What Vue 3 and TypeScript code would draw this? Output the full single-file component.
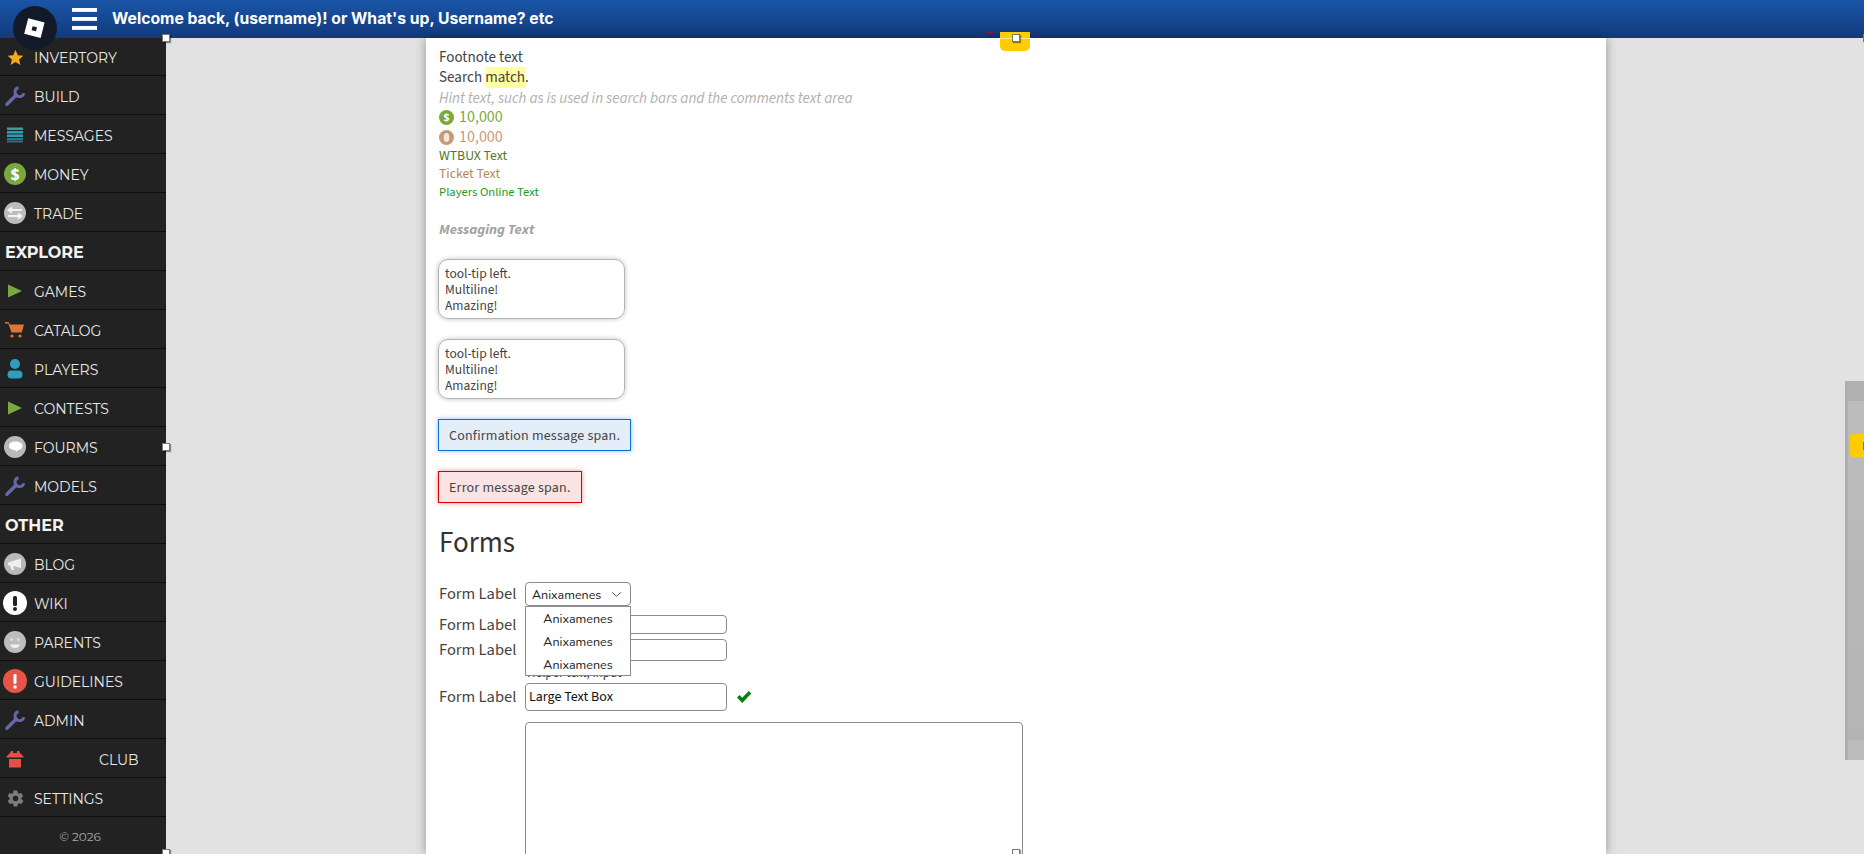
<script setup lang="ts">
type Row = { label: string; icon?: string; heading?: boolean; wide?: boolean }

const rows: Row[] = [
  { label: 'INVERTORY', icon: 'star' },
  { label: 'BUILD', icon: 'wrench' },
  { label: 'MESSAGES', icon: 'list' },
  { label: 'MONEY', icon: 'money' },
  { label: 'TRADE', icon: 'trade' },
  { label: 'EXPLORE', heading: true },
  { label: 'GAMES', icon: 'play' },
  { label: 'CATALOG', icon: 'cart' },
  { label: 'PLAYERS', icon: 'person' },
  { label: 'CONTESTS', icon: 'play' },
  { label: 'FOURMS', icon: 'bubble' },
  { label: 'MODELS', icon: 'wrench' },
  { label: 'OTHER', heading: true },
  { label: 'BLOG', icon: 'blog' },
  { label: 'WIKI', icon: 'wiki' },
  { label: 'PARENTS', icon: 'smile' },
  { label: 'GUIDELINES', icon: 'alert' },
  { label: 'ADMIN', icon: 'wrench' },
  { label: 'CLUB', icon: 'club', wide: true },
  { label: 'SETTINGS', icon: 'gear' },
]

const handles = [
  { x: 166, y: 38 },
  { x: 166, y: 447 },
  { x: 166, y: 853 },
  { x: 1016, y: 38 },
  { x: 1867, y: 38 },
  { x: 1867, y: 446 },
  { x: 1016, y: 853 },
]

const options = ['Anixamenes', 'Anixamenes', 'Anixamenes']
</script>

<template>
  <div class="app">
    <header class="topbar">
      <span class="burger"><i></i><i></i><i></i></span>
      <h1 class="welcome">Welcome back, (username)! or What's up, Username? etc</h1>
    </header>

    <div class="logo">
      <svg viewBox="0 0 44 44" width="44" height="44">
        <path d="M15.2 12.2 L31.6 16.4 L27.6 32 L11.2 27.8 Z M19.6 20.2 L18.6 24.2 L23 25.2 L24 21.2 Z" fill="#fff" fill-rule="evenodd" />
      </svg>
    </div>

    <div class="layout">
      <nav class="sidebar">
        <div v-for="row in rows" :key="row.label" class="row" :class="{ heading: row.heading }">
          <span v-if="row.icon" class="ico">
            <svg v-if="row.icon === 'star'" viewBox="0 0 24 24" width="17" height="17"><path d="M12 1.5l3.2 7.2 7.8.8-5.9 5.2 1.8 7.8L12 18.4l-6.9 4.1 1.8-7.8L1 9.5l7.8-.8z" fill="#f3aa1c" /></svg>
            <svg v-else-if="row.icon === 'wrench'" viewBox="0 0 24 24" width="22" height="22"><g fill="none" stroke="#6468a8"><path d="M3.2 21 L13.4 11" stroke-width="3.8" stroke-linecap="round" /><path d="M15.8 3 A4.9 4.9 0 1 0 21.6 9" stroke-width="3.2" /></g></svg>
            <svg v-else-if="row.icon === 'list'" viewBox="0 0 16 16" width="16" height="16"><g fill="#2f9db5"><rect y="0.5" width="16" height="2.5" /><rect y="4" width="16" height="2.5" /><rect y="7.5" width="16" height="2.5" /><rect y="11" width="16" height="2.5" opacity=".7" /><rect y="14" width="16" height="1.5" opacity=".6" /></g></svg>
            <svg v-else-if="row.icon === 'money'" viewBox="0 0 22 22" width="22" height="22"><circle cx="11" cy="11" r="11" fill="#7aa83f" /><text x="11" y="16.5" text-anchor="middle" class="glyph">$</text></svg>
            <svg v-else-if="row.icon === 'trade'" viewBox="0 0 22 22" width="22" height="22"><circle cx="11" cy="11" r="11" fill="#bdbdbd" /><path d="M5 8h13M8 5.5L4.8 8 8 10.5M17 14H4M14 11.5l3.2 2.5-3.2 2.5" stroke="#f3f3f3" stroke-width="2.2" fill="none" /></svg>
            <svg v-else-if="row.icon === 'play'" viewBox="0 0 14 14" width="14" height="14"><path d="M0 0.5 L14 7 L0 13.5 Z" fill="#7aa83f" /></svg>
            <svg v-else-if="row.icon === 'cart'" viewBox="0 0 20 18" width="20" height="18"><path d="M0 1h3.5l1.2 2.5H19l-2.2 8H6.6L3.2 2.6H0z" fill="#dc7735" /><circle cx="7" cy="15" r="1.6" fill="#dc7735" /><circle cx="15" cy="15" r="1.6" fill="#dc7735" /></svg>
            <svg v-else-if="row.icon === 'person'" viewBox="0 0 16 20" width="16" height="20"><circle cx="8" cy="5" r="5" fill="#2f9dc0" /><rect x="0.5" y="11.5" width="15" height="8" rx="4" fill="#2f9dc0" /></svg>
            <svg v-else-if="row.icon === 'bubble'" viewBox="0 0 22 22" width="22" height="22"><circle cx="11" cy="11" r="11" fill="#b9b9b9" /><path d="M11 5.5c4.5 0 7.5 1.8 7.5 4.4 0 2.3-2 4-5 4.3-.3 1-1 1.7-2 2.1.4-.7.5-1.3.4-2-3.8-.1-6.9-1.9-6.9-4.4 0-2.6 2.6-4.4 6-4.4z" fill="#fff" /></svg>
            <svg v-else-if="row.icon === 'blog'" viewBox="0 0 22 22" width="22" height="22"><circle cx="11" cy="11" r="11" fill="#b9b9b9" /><path d="M4 9.5 L17 5.5 V15 L9 13 L10 17 H7.5 L6 12.5 H4z" fill="#efefef" /></svg>
            <svg v-else-if="row.icon === 'wiki'" viewBox="0 0 24 24" width="24" height="24"><circle cx="12" cy="12" r="12" fill="#fff" /><rect x="10" y="5" width="4" height="10" rx="1.5" fill="#222" /><circle cx="12" cy="18" r="2" fill="#222" /></svg>
            <svg v-else-if="row.icon === 'smile'" viewBox="0 0 22 22" width="22" height="22"><circle cx="11" cy="11" r="11" fill="#bdbdbd" /><circle cx="7.5" cy="8.5" r="1.5" fill="#dedede" /><circle cx="14.5" cy="8.5" r="1.5" fill="#dedede" /><path d="M6 13.5h10c-.8 2.4-2.6 3.5-5 3.5s-4.2-1.1-5-3.5z" fill="#f2f2f2" /></svg>
            <svg v-else-if="row.icon === 'alert'" viewBox="0 0 24 24" width="24" height="24"><circle cx="12" cy="12" r="12" fill="#e65445" /><rect x="10.5" y="5" width="3" height="10" rx="1.2" fill="#fff" /><circle cx="12" cy="18" r="1.8" fill="#fff" /></svg>
            <svg v-else-if="row.icon === 'club'" viewBox="0 0 18 18" width="18" height="18"><path d="M0.5 6.5 L4 3 L5 1 H7 V3 H11 V1 H13 L14 3 L17.5 6.5 V7.5 H0.5 Z M3 9 H15 V17.5 H3 Z" fill="#e55044" /></svg>
            <svg v-else-if="row.icon === 'gear'" viewBox="0 0 24 24" width="19" height="19"><path d="M19.4 13c.1-.3.1-.7.1-1s0-.7-.1-1l2.1-1.6c.2-.2.2-.4.1-.6l-2-3.5c-.1-.2-.4-.3-.6-.2l-2.5 1c-.5-.4-1.1-.7-1.7-1l-.4-2.6c0-.3-.2-.5-.5-.5h-4c-.3 0-.5.2-.5.4l-.4 2.7c-.6.2-1.2.6-1.7 1l-2.5-1c-.2-.1-.5 0-.6.2l-2 3.5c-.1.2-.1.5.1.6L4.6 11c-.1.3-.1.7-.1 1s0 .7.1 1l-2.1 1.6c-.2.2-.2.4-.1.6l2 3.5c.1.2.4.3.6.2l2.5-1c.5.4 1.1.7 1.7 1l.4 2.6c0 .3.2.5.5.5h4c.3 0 .5-.2.5-.4l.4-2.7c.6-.2 1.2-.6 1.7-1l2.5 1c.2.1.5 0 .6-.2l2-3.5c.1-.2.1-.5-.1-.6zM12 15.5a3.5 3.5 0 1 1 0-7 3.5 3.5 0 0 1 0 7z" fill="#7c7c7c" /></svg>
          </span>
          <span class="row-label" :class="{ wide: row.wide }">{{ row.label }}</span>
        </div>
        <div class="copy">© 2026</div>
      </nav>

      <main class="stage">
        <section class="card">
          <p class="line">Footnote text</p>
          <p class="line">Search <mark>match</mark>.</p>
          <p class="line hint">Hint text, such as is used in search bars and the comments text area</p>
          <p class="line amount green first">
            <svg viewBox="0 0 16 16" width="15" height="15"><circle cx="8" cy="8" r="8" fill="#7aa83f" /><text x="8" y="12" text-anchor="middle" class="glyph small">$</text></svg>
            10,000
          </p>
          <p class="line amount tan">
            <svg viewBox="0 0 16 16" width="15" height="15"><circle cx="8" cy="8" r="8" fill="#c89a73" /><ellipse cx="8" cy="8" rx="3" ry="4.8" fill="#f3e7dc" /></svg>
            10,000
          </p>
          <p class="mini wtbux">WTBUX Text</p>
          <p class="mini ticket">Ticket Text</p>
          <p class="mini online">Players Online Text</p>
          <p class="messaging">Messaging Text</p>

          <div class="tip">tool-tip left.<br />Multiline!<br />Amazing!</div>
          <div class="tip">tool-tip left.<br />Multiline!<br />Amazing!</div>

          <div class="notice ok">Confirmation message span.</div>
          <div class="notice bad">Error message span.</div>

          <h2 class="forms">Forms</h2>

          <div class="form">
            <div class="f-row r1">
              <label>Form Label</label>
              <div class="select">
                <span>Anixamenes</span>
                <svg viewBox="0 0 12 8" width="11" height="7"><path d="M1 1.5 L6 6 L11 1.5" fill="none" stroke="#555" stroke-width="1.1" /></svg>
              </div>
            </div>
            <div class="f-row r2">
              <label>Form Label</label>
              <div class="input small"></div>
            </div>
            <div class="f-row r3">
              <label>Form Label</label>
              <div class="input medium"></div>
            </div>
            <p class="under">Helper text, input</p>
            <div class="f-row r4">
              <label>Form Label</label>
              <div class="input large">Large Text Box</div>
              <svg class="tick" viewBox="0 0 16 14" width="16" height="14"><path d="M1 7.5 L3.5 5 L6.2 7.7 L12.8 1 L15.3 3.5 L6.2 13 Z" fill="#0a800a" /></svg>
            </div>
            <div class="textarea"></div>
          </div>

          <div class="menu">
            <div v-for="(opt, i) in options" :key="i" class="menu-item">{{ opt }}</div>
          </div>
        </section>
      </main>
    </div>

    <div class="strip"><span class="strip-tab"></span></div>
    <span class="tab"></span>
    <span class="red-mark"></span>
    <span v-for="h in handles" :key="h.x + '-' + h.y" class="handle" :style="{ left: h.x - 4 + 'px', top: h.y - 4 + 'px' }"></span>
  </div>
</template>

<style>
html, body { margin: 0; padding: 0; overflow: hidden; }
</style>

<style scoped>
.app {
  position: relative;
  width: 1864px;
  height: 854px;
  overflow: hidden;
  background: #e2e2e2;
  font-family: "Source Sans Pro", "Source Sans 3", "Noto Sans CJK SC", "Noto Sans", sans-serif;
  color: #333;
}
.topbar {
  height: 38px;
  display: flex;
  align-items: center;
  padding-left: 72px;
  box-sizing: border-box;
  background: linear-gradient(#1a55a8, #123a7c);
}
.burger { width: 25px; display: flex; flex-direction: column; gap: 5px; }
.burger i { display: block; height: 4px; background: linear-gradient(#fff 70%, #cfd6e4); }
.welcome {
  margin: 0 0 0 15px;
  color: #fff;
  font: 700 15.72px/20px Inter, "Noto Sans", sans-serif;
}
.logo {
  position: absolute;
  left: 13px;
  top: 6px;
  width: 44px;
  height: 44px;
  border-radius: 50%;
  background: #121a27;
  z-index: 3;
}
.logo svg { display: block; }
.layout { display: flex; height: 816px; }
.sidebar {
  width: 166px;
  flex: none;
  background: #222;
  font-family: Montserrat, Inter, "Noto Sans", sans-serif;
  box-sizing: border-box;
}
.row {
  height: 39px;
  box-sizing: border-box;
  border-bottom: 1px solid #0d0d0d;
  padding-top: 3px;
  display: flex;
  align-items: center;
  color: #e8e8e8;
  font-size: 14px;
}
.row:first-child { height: 38px; }
.row.heading { font-size: 16px; font-weight: 700; color: #f2f2f2; padding-left: 5px; }
.ico { width: 30px; margin-right: 4px; flex: none; display: flex; justify-content: center; align-items: center; margin-top: -1px; }
.ico svg { display: block; }
.row-label.wide { margin-left: 65px; }
.copy { text-align: center; color: #a8a8a8; font-size: 12px; line-height: 39px; padding-right: 6px; }
.glyph { font: 700 16px "Noto Sans", sans-serif; fill: #fff; }
.glyph.small { font-size: 11px; }

.stage { flex: 1; min-width: 0; padding-left: 260px; }
.card {
  position: relative;
  width: 1180px;
  height: 816px;
  box-sizing: border-box;
  padding: 10px 0 0 13px;
  background: #fff;
  box-shadow: 0 0 10px rgba(0, 0, 0, .35);
}
p { margin: 0; }
.line { font-size: 15.1px; line-height: 20.3px; color: #444; height: 20.3px; }
mark { background: #ffffa0; color: inherit; padding: 0; }
.hint { font-style: italic; color: #b0b0b0; }
.amount { display: flex; align-items: center; gap: 5px; font-size: 16px; }
.first { margin-top: -2px; }
.green { color: #7aa83f; }
.tan { color: #c89a73; }
.mini { font-size: 13.7px; line-height: 18px; }
.wtbux { color: #4f7a28; }
.ticket { color: #b5895f; }
.online { color: #1e9a1e; font-size: 12.6px; }
.messaging { margin-top: 19px; font-size: 14.5px; font-weight: 700; font-style: italic; color: #a2a2a2; line-height: 20px; }
.tip {
  width: 187px;
  height: 60px;
  box-sizing: border-box;
  margin: 19px 0 0 -1px;
  padding: 6px 6px;
  border: 1px solid #b4b4b4;
  border-radius: 10px;
  box-shadow: 0 0 5px rgba(0, 0, 0, .25);
  font-size: 13.5px;
  line-height: 16px;
  color: #444;
}
.tip + .tip { margin-top: 20px; }
.notice {
  width: max-content;
  height: 32px;
  box-sizing: border-box;
  margin: 20px 0 0 -1px;
  padding: 0 10px;
  border: 1px solid;
  font-size: 14px;
  line-height: 32px;
  letter-spacing: .2px;
  color: #444;
}
.ok { background: #e4eef9; border-color: #0870d4; box-shadow: 0 0 5px rgba(8, 112, 212, .45); }
.bad { background: #fae3e3; border-color: #d80000; box-shadow: 0 0 5px rgba(216, 0, 0, .45); }
.forms { margin: 20px 0 0; font-size: 29px; font-weight: 400; line-height: 40px; color: #333; }
.form { margin-top: 19px; }
.f-row { display: flex; align-items: center; }
.f-row label { width: 86px; flex: none; font-size: 16.5px; color: #444; white-space: nowrap; }
.r1 { height: 24px; }
.r2 { height: 19px; margin-top: 9px; }
.r3 { height: 22px; margin-top: 5px; }
.r4 { height: 28px; }
.select, .input, .textarea { box-sizing: border-box; border: 1px solid #8c8c8c; border-radius: 4px; background: #fff; }
.select {
  width: 106px;
  height: 24px;
  display: flex;
  align-items: center;
  justify-content: space-between;
  padding: 0 8px 0 6px;
  font: 12.5px Nunito, "Noto Sans", sans-serif;
  color: #222;
}
.input { width: 202px; font-size: 14px; color: #111; padding-left: 3px; }
.small { height: 19px; }
.medium { height: 22px; }
.large { height: 28px; line-height: 26px; }
.under { height: 22px; margin-left: 86px; padding-left: 2px; font-size: 13px; line-height: 25px; color: #333; }
.tick { margin-left: 9px; }
.textarea { width: 498px; height: 200px; margin: 11px 0 0 86px; }
.menu {
  position: absolute;
  left: 99px;
  top: 568px;
  width: 106px;
  height: 70px;
  box-sizing: border-box;
  border: 1px solid #8c8c8c;
  background: #fff;
  font: 12.5px/23px Nunito, "Noto Sans", sans-serif;
  color: #222;
  text-align: center;
}
.menu-item { height: 23px; }
.strip {
  position: absolute;
  left: 1845px;
  top: 381px;
  width: 19px;
  height: 379px;
  box-sizing: border-box;
  border-left: 3px solid #aeaeae;
  background: linear-gradient(#b0b0b0 0, #b0b0b0 20px, #bcbcbc 20px, #b4b4b4 359px, #bcbcbc 359px);
}
.strip-tab {
  position: absolute;
  left: 2px;
  top: 53px;
  width: 14px;
  height: 23px;
  border-radius: 3px 0 0 3px;
  background: #ffcc00;
}
.tab {
  position: absolute;
  left: 1000px;
  top: 32px;
  width: 30px;
  height: 19px;
  border-radius: 0 0 5px 5px;
  background: #ffcc00;
}
.tab::after {
  content: "";
  position: absolute;
  left: 0;
  right: 0;
  top: 6px;
  height: 1px;
  background: rgba(255, 255, 255, .6);
}
.red-mark { position: absolute; left: 988px; top: 32px; width: 5px; height: 1px; background: #a01030; }
.handle {
  position: absolute;
  width: 8px;
  height: 8px;
  box-sizing: border-box;
  background: #fff;
  border: 1px solid #777;
  box-shadow: 1px 1px 1px rgba(0, 0, 0, .4);
}
</style>
